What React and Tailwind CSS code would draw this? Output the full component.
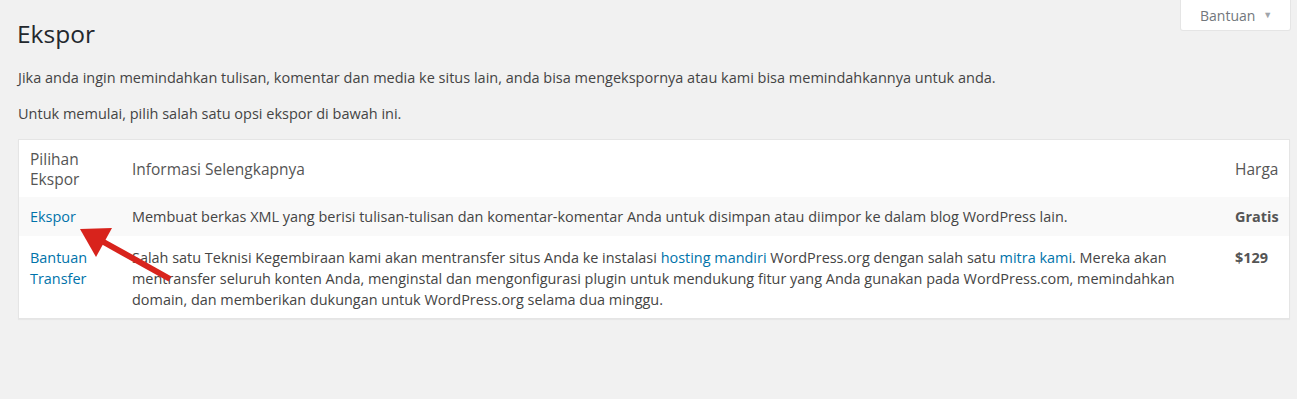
export default function App() {
    return (
        <div className="relative min-h-[399px] bg-[#f1f1f1] pl-[18px] pr-[7px] font-['Open_Sans',sans-serif] text-[#444]">
            <div className="flex justify-end">
                <button className="flex h-[30px] w-[109px] items-center gap-[8px] rounded-b-[2px] bg-white pl-[19px] text-[14px] text-[#72777c] shadow-[0_0_0_1px_#e5e5e5]">
                    Bantuan
                    <span className="text-[9px] text-[#a0a5aa]">▼</span>
                </button>
            </div>
            <h1 className="-mt-[11px] -ml-[1px] text-[24.5px] leading-[30px] font-normal text-[#23282d]">Ekspor</h1>
            <p className="mt-[19px] text-[14.5px] leading-[20px]">
                Jika anda ingin memindahkan tulisan, komentar dan media ke situs lain, anda bisa mengekspornya atau kami bisa memindahkannya untuk anda.
            </p>
            <p className="mt-[16px] text-[14.5px] leading-[20px]">
                Untuk memulai, pilih salah satu opsi ekspor di bawah ini.
            </p>
            <div className="mt-[15px] border border-[#e5e5e5] bg-white text-[14.45px] shadow-[0_1px_1px_rgba(0,0,0,0.04)]">
                <div className="grid h-[57px] grid-cols-[103px_1fr_65px] items-center text-[15.5px] leading-[20px] text-[#555]">
                    <div className="pl-[11px]">Pilihan<br />Ekspor</div>
                    <div className="pl-[10px]">Informasi Selengkapnya</div>
                    <div className="pl-[11px]">Harga</div>
                </div>
                <div className="grid h-[39px] grid-cols-[103px_1fr_65px] items-center bg-[#f9f9f9] leading-[21px]">
                    <div className="pl-[11px]"><a className="text-[#0073aa]">Ekspor</a></div>
                    <div className="pl-[10px]">
                        Membuat berkas XML yang berisi tulisan-tulisan dan komentar-komentar Anda untuk disimpan atau diimpor ke dalam blog WordPress lain.
                    </div>
                    <div className="pl-[11px] font-bold text-[#555]">Gratis</div>
                </div>
                <div className="grid h-[82px] grid-cols-[103px_1fr_65px] items-start pt-[11px] leading-[21px]">
                    <div className="pl-[11px] text-[#0073aa]"><a>Bantuan<br />Transfer</a></div>
                    <div className="pl-[10px] pr-[10px]">
                        Salah satu Teknisi Kegembiraan kami akan mentransfer situs Anda ke instalasi{" "}
                        <a className="text-[#0073aa]">hosting mandiri</a> WordPress.org dengan salah satu{" "}
                        <a className="text-[#0073aa]">mitra kami</a>. Mereka akan mentransfer seluruh konten Anda, menginstal dan mengonfigurasi plugin untuk mendukung fitur yang Anda gunakan pada WordPress.com, memindahkan domain, dan memberikan dukungan untuk WordPress.org selama dua minggu.
                    </div>
                    <div className="pl-[11px] font-bold text-[#555]">$129</div>
                </div>
            </div>
            <svg className="pointer-events-none absolute left-0 top-0" width="200" height="300" viewBox="0 0 200 300">
                <line x1="170" y1="279" x2="100" y2="240" stroke="#d8231c" strokeWidth="6" />
                <polygon points="80,229 112,228 96,257" fill="#d8231c" />
            </svg>
        </div>
    );
}
